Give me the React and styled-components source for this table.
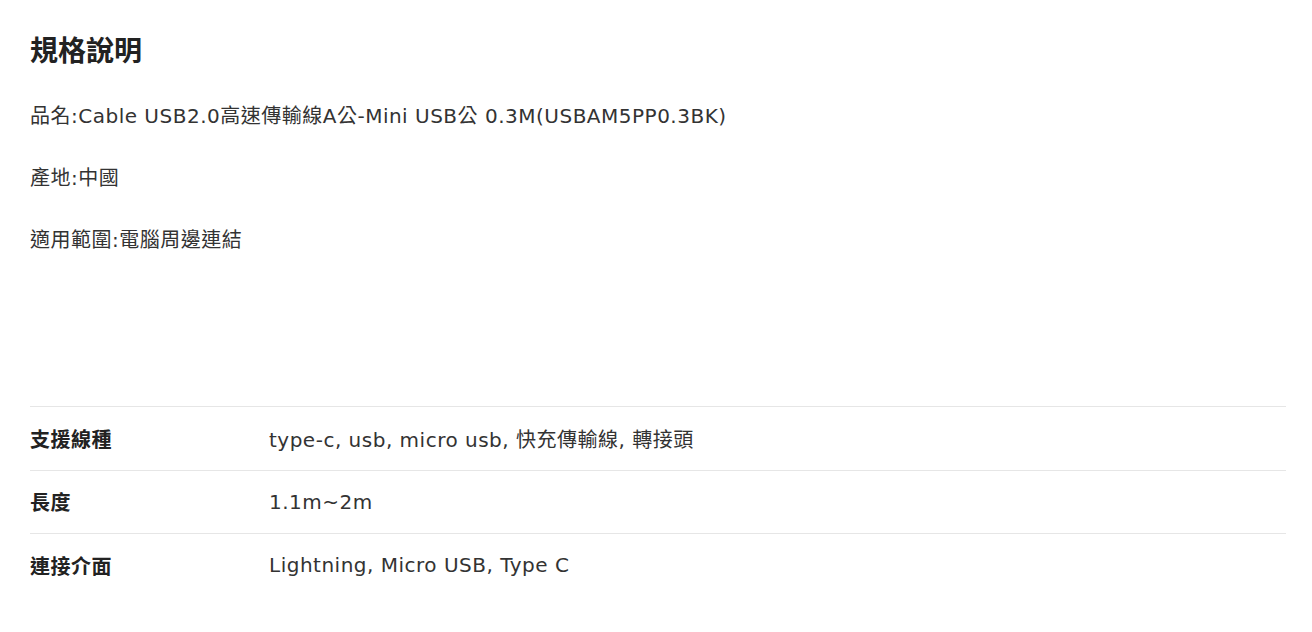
import React from "react";
import styled, { createGlobalStyle } from "styled-components";

const GlobalStyle = createGlobalStyle`
  html, body {
    margin: 0;
    padding: 0;
    background: #fff;
  }
  body {
    font-family: "DejaVu Sans", "Noto Sans CJK TC", sans-serif;
    color: #333;
  }
`;

const Page = styled.div`
  padding: 30px 26px 30px 30px;
`;

const Title = styled.h2`
  margin: 0 0 26px;
  font-size: 28px;
  line-height: 44px;
  font-weight: 700;
  color: #222;
`;

const Para = styled.p`
  margin: 0 0 30px;
  font-size: 20px;
  line-height: 32px;
  letter-spacing: 0.5px;
`;

const SpecTable = styled.div`
  margin-top: 150px;
  border-top: 1px solid #e6e6e6;
`;

const Row = styled.div`
  display: grid;
  grid-template-columns: 239px 1fr;
  align-items: center;
  height: 62.5px;
  border-bottom: ${(p) => (p.last ? "none" : "1px solid #e6e6e6")};
  font-size: 20px;
`;

const Label = styled.div`
  font-weight: 700;
  color: #222;
  letter-spacing: 0.5px;
`;

const Value = styled.div`
  color: #333;
  letter-spacing: 0.5px;
`;

const specs = [
  { label: "支援線種", value: "type-c, usb, micro usb, 快充傳輸線, 轉接頭" },
  { label: "長度", value: "1.1m~2m" },
  { label: "連接介面", value: "Lightning, Micro USB, Type C" },
];

export default function App() {
  return (
    <>
      <GlobalStyle />
      <Page>
        <Title>規格說明</Title>
        <Para>品名:Cable USB2.0高速傳輸線A公-Mini USB公 0.3M(USBAM5PP0.3BK)</Para>
        <Para>產地:中國</Para>
        <Para>適用範圍:電腦周邊連結</Para>
        <SpecTable>
          {specs.map((s, i) => (
            <Row key={s.label} last={i === specs.length - 1}>
              <Label>{s.label}</Label>
              <Value>{s.value}</Value>
            </Row>
          ))}
        </SpecTable>
      </Page>
    </>
  );
}
